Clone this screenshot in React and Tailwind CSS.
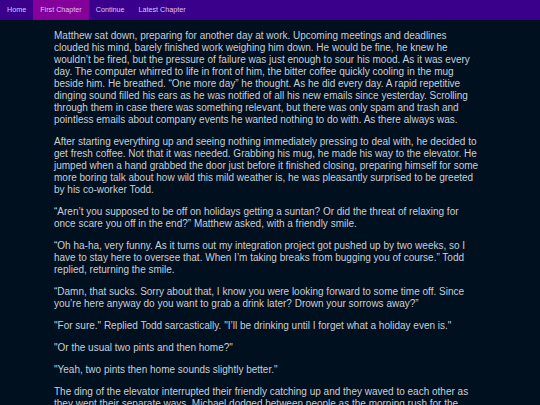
export default function App() {
  const tabs = ["Home", "First Chapter", "Continue", "Latest Chapter"];
  const paragraphs = [
    "Matthew sat down, preparing for another day at work. Upcoming meetings and deadlines clouded his mind, barely finished work weighing him down. He would be fine, he knew he wouldn’t be fired, but the pressure of failure was just enough to sour his mood. As it was every day. The computer whirred to life in front of him, the bitter coffee quickly cooling in the mug beside him. He breathed. “One more day” he thought. As he did every day. A rapid repetitive dinging sound filled his ears as he was notified of all his new emails since yesterday. Scrolling through them in case there was something relevant, but there was only spam and trash and pointless emails about company events he wanted nothing to do with. As there always was.",
    "After starting everything up and seeing nothing immediately pressing to deal with, he decided to get fresh coffee. Not that it was needed. Grabbing his mug, he made his way to the elevator. He jumped when a hand grabbed the door just before it finished closing, preparing himself for some more boring talk about how wild this mild weather is, he was pleasantly surprised to be greeted by his co-worker Todd.",
    "“Aren’t you supposed to be off on holidays getting a suntan? Or did the threat of relaxing for once scare you off in the end?” Matthew asked, with a friendly smile.",
    "“Oh ha-ha, very funny. As it turns out my integration project got pushed up by two weeks, so I have to stay here to oversee that. When I’m taking breaks from bugging you of course.” Todd replied, returning the smile.",
    "“Damn, that sucks. Sorry about that, I know you were looking forward to some time off. Since you’re here anyway do you want to grab a drink later? Drown your sorrows away?”",
    "\"For sure.\" Replied Todd sarcastically. \"I’ll be drinking until I forget what a holiday even is.\"",
    "\"Or the usual two pints and then home?\"",
    "\"Yeah, two pints then home sounds slightly better.\"",
    "The ding of the elevator interrupted their friendly catching up and they waved to each other as they went their separate ways. Michael dodged between people as the morning rush for the coffee machine began, nodding politely to the familiar faces he passed on the way.",
  ];

  return (
    <div className="h-screen overflow-hidden bg-[#00101f] font-['Liberation_Sans',Arial,sans-serif]">
      <nav className="flex h-[20px] bg-[#3b008b]">
        {tabs.map((t) => (
          <a
            key={t}
            className={`flex items-center px-[7px] text-[7.2px] text-[#d8c8f4] ${
              t === "First Chapter" ? "bg-[#85009a]" : ""
            }`}
          >
            {t}
          </a>
        ))}
      </nav>
      <main className="mx-auto w-[432px] pr-[4px] text-[10px] leading-[12px] text-[#c8cfd8]">
        {paragraphs.map((p, i) => (
          <p key={i} className="my-[10px]">
            {p}
          </p>
        ))}
      </main>
    </div>
  );
}
